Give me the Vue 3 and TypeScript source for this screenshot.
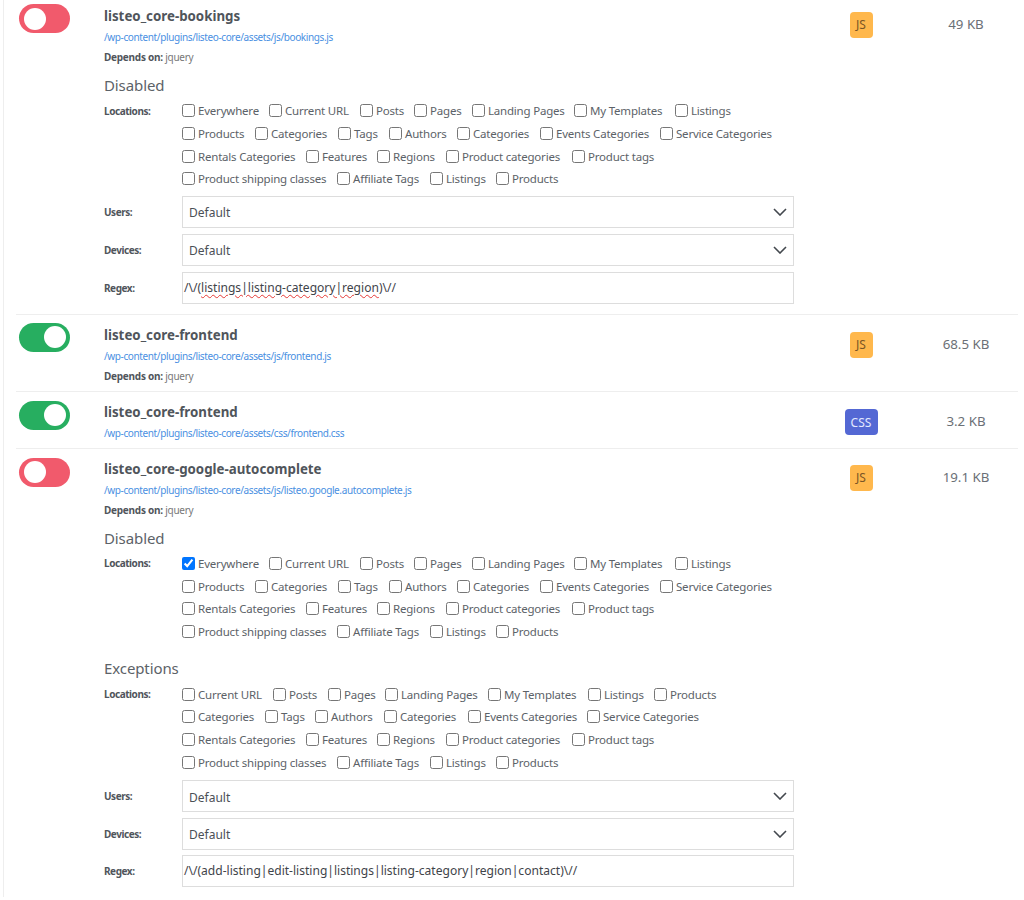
<script setup lang="ts">
interface Opt { label: string; w: number; checked?: boolean }
interface Panel { title: string; rows: Opt[][] }
interface Asset {
  name: string; path: string; on: boolean; type: string; size: string; deps?: string;
  panels?: Panel[]; regex?: string; wavy?: boolean;
}
const mk = (list: [string, number][]): Opt[] => list.map(([label, w]) => ({ label, w }));

const row3 = mk([['Rentals Categories', 124], ['Features', 71], ['Regions', 69], ['Product categories', 126], ['Product tags', 100]]);
const row4 = mk([['Product shipping classes', 155], ['Affiliate Tags', 93], ['Listings', 66], ['Products', 70]]);
const disabledRows = (checked: boolean): Opt[][] => [
  [{ label: 'Everywhere', w: 87, checked }, ...mk([['Current URL', 91], ['Posts', 54], ['Pages', 58], ['Landing Pages', 102], ['My Templates', 101], ['Listings', 66]])],
  mk([['Products', 73], ['Categories', 83], ['Tags', 51], ['Authors', 68], ['Categories', 83], ['Events Categories', 120], ['Service Categories', 120]]),
  row3, row4,
];
const exceptionRows: Opt[][] = [
  mk([['Current URL', 91], ['Posts', 55], ['Pages', 57], ['Landing Pages', 103], ['My Templates', 100], ['Listings', 66], ['Products', 70]]),
  mk([['Categories', 83], ['Tags', 50], ['Authors', 69], ['Categories', 84], ['Events Categories', 119], ['Service Categories', 120]]),
  row3, row4,
];

const assets: Asset[] = [
  { name: 'listeo_core-bookings', path: '/wp-content/plugins/listeo-core/assets/js/bookings.js', on: false, type: 'JS', size: '49 KB', deps: 'jquery',
    panels: [{ title: 'Disabled', rows: disabledRows(false) }], regex: 'listings|listing-category|region', wavy: true },
  { name: 'listeo_core-frontend', path: '/wp-content/plugins/listeo-core/assets/js/frontend.js', on: true, type: 'JS', size: '68.5 KB', deps: 'jquery' },
  { name: 'listeo_core-frontend', path: '/wp-content/plugins/listeo-core/assets/css/frontend.css', on: true, type: 'CSS', size: '3.2 KB' },
  { name: 'listeo_core-google-autocomplete', path: '/wp-content/plugins/listeo-core/assets/js/listeo.google.autocomplete.js', on: false, type: 'JS', size: '19.1 KB', deps: 'jquery',
    panels: [{ title: 'Disabled', rows: disabledRows(true) }, { title: 'Exceptions', rows: exceptionRows }], regex: 'add-listing|edit-listing|listings|listing-category|region|contact' },
];
</script>

<template>
  <div class="list">
    <div v-for="(a, i) in assets" :key="i" class="asset">
      <div class="toggle-col">
        <span class="toggle" :class="a.on ? 'on' : 'off'"><span class="knob"></span></span>
      </div>
      <div class="main">
        <div class="name">{{ a.name }}</div>
        <a class="path">{{ a.path }}</a>
        <div v-if="a.deps" class="deps"><b>Depends on:</b> {{ a.deps }}</div>
        <template v-if="a.panels">
          <div v-for="p in a.panels" :key="p.title" class="panel">
            <div class="heading">{{ p.title }}</div>
            <div class="field locs">
              <b class="label loc">Locations:</b>
              <div class="checks">
                <div v-for="(r, ri) in p.rows" :key="ri" class="check-row">
                  <label v-for="(o, oi) in r" :key="oi" class="check" :style="{ width: o.w + 'px' }">
                    <input type="checkbox" :checked="o.checked" />
                    <span>{{ o.label }}</span>
                  </label>
                </div>
              </div>
            </div>
          </div>
          <div class="controls">
            <div v-for="s in ['Users:', 'Devices:']" :key="s" class="field center">
              <b class="label">{{ s }}</b>
              <div class="box select">
                <span>Default</span>
                <svg width="14" height="8" viewBox="0 0 14 8" fill="none"><path d="M1 1l6 6 6-6" stroke="#43484e" stroke-width="1.6"/></svg>
              </div>
            </div>
            <div class="field center">
              <b class="label">Regex:</b>
              <div class="box regex">/\/(<span :class="{ wavy: a.wavy }">{{ a.regex }}</span>)\//</div>
            </div>
          </div>
        </template>
      </div>
      <div class="type-col">
        <span class="badge" :class="a.type.toLowerCase()">{{ a.type }}</span>
      </div>
      <div class="size">{{ a.size }}</div>
    </div>
  </div>
</template>

<style>
body { background: #fff; overflow: hidden; }
</style>

<style scoped>
.list {
  height: 901px;
  margin: -4px 6px 0 3px;
  padding-left: 12px;
  border-left: 1px solid #eeeeee;
  font-family: "Noto Sans", "Open Sans", sans-serif;
  color: #5c6268;
}
.asset {
  display: flex;
  align-items: flex-start;
  border-bottom: 1px solid #eeeeee;
  padding-bottom: 5px;
}
.toggle-col { width: 88px; padding: 8px 0 0 3px; flex: none; box-sizing: border-box; }
.asset:nth-child(n+3) .toggle-col { padding-top: 9px; }
.toggle {
  display: block;
  width: 51px;
  height: 29px;
  border-radius: 15px;
  position: relative;
}
.toggle.off { background: #f15a6c; }
.toggle.on { background: #27ae60; }
.knob {
  position: absolute;
  top: 3.5px;
  width: 22px;
  height: 22px;
  border-radius: 50%;
  background: #fff;
}
.off .knob { left: 5px; }
.on .knob { left: 25px; }
.main { width: 690px; flex: none; }
.name {
  padding-top: 9px;
  line-height: 22px;
  font-size: 13.3px;
  font-weight: 700;
  color: #50555b;
}
.path {
  display: block;
  line-height: 20px;
  font-size: 10px;
  letter-spacing: -0.38px;
  color: #4a90e2;
}
.deps {
  line-height: 20px;
  font-size: 10px;
  letter-spacing: -0.25px;
  color: #777;
}
.deps b, .label { font-weight: 700; color: #50555b; }
.heading {
  margin-top: 4px;
  line-height: 28px;
  font-size: 15px;
  letter-spacing: -0.1px;
  color: #5c6268;
}
.panel + .panel .heading { margin-top: 11.5px; }
.locs { margin-top: 0.5px; }
.field { display: flex; }
.field.center { align-items: center; }
.label {
  width: 78px;
  flex: none;
  font-size: 10px;
  letter-spacing: -0.45px;
}
.label.loc { line-height: 22.67px; }
.checks { flex: 1; }
.check-row { display: flex; height: 22.67px; align-items: center; }
.check {
  display: flex;
  align-items: center;
  gap: 3px;
  font-size: 11.5px;
  letter-spacing: -0.2px;
  white-space: nowrap;
  flex: none;
  color: #5c6268;
}
.check input { margin: 0; width: 13px; height: 13px; flex: none; accent-color: #0075ff; }
.controls { display: flex; flex-direction: column; gap: 6px; margin-top: 5.5px; padding-bottom: 5px; }
.asset:last-child .controls { gap: 5.5px; margin-top: 7px; padding-bottom: 6px; }
.box {
  box-sizing: border-box;
  width: 612px;
  height: 32px;
  border: 1px solid #dddddd;
  display: flex;
  align-items: center;
  padding: 0 6px;
  font-size: 12px;
  color: #4b5056;
}
.select { justify-content: space-between; padding: 2px 6px 0 6px; }
.select svg { margin-top: -2px; }
.regex { display: block; line-height: 29px; padding: 0 1px; white-space: pre; color: #3f444a; font-size: 12.05px; }
.wavy { text-decoration: underline wavy #e53935 1px; text-underline-offset: 2px; }
.type-col { width: 134px; flex: none; display: flex; justify-content: center; padding: 16px 0 0 0; box-sizing: border-box; }
.asset:nth-child(2) .type-col, .asset:nth-child(3) .type-col { padding-top: 17px; }
.badge {
  height: 26px;
  line-height: 26px;
  border-radius: 4px;
  text-align: center;
  font-size: 12px;
}
.badge.js { width: 23px; background: #ffb84d; color: #7a5526; }
.badge.css { width: 33px; line-height: 28px; background: #5468d4; color: #e3e8ff; }
.size {
  width: 76px;
  flex: none;
  text-align: center;
  padding-top: 18px;
  line-height: 20px;
  font-size: 13.3px;
  color: #6b7076;
}
.asset:nth-child(2) .size, .asset:nth-child(3) .size { padding-top: 19px; }
</style>
